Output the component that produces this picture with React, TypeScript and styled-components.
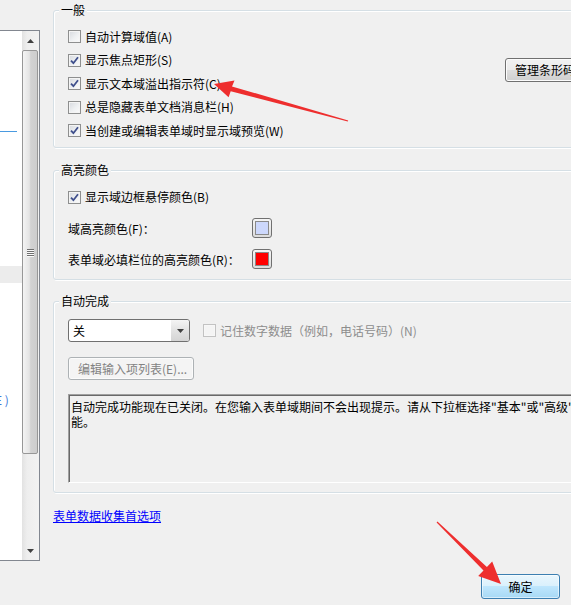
import React from "react";
import styled, { createGlobalStyle } from "styled-components";

const GlobalStyle = createGlobalStyle`
  html, body { margin: 0; padding: 0; background: #f0f0f0; }
  body {
    font-family: "Noto Sans CJK SC", "Microsoft YaHei", "DejaVu Sans", sans-serif;
    font-size: 12px;
    color: #000;
  }
`;

const Root = styled.div`
  position: relative;
  width: 571px;
  height: 605px;
  overflow: hidden;
  display: flex;
  align-items: flex-start;
  background: #f0f0f0;
`;

/* ---------- left list ---------- */
const ListBox = styled.div`
  flex: 0 0 40px;
  margin-top: 30px;
  height: 531px;
  box-sizing: border-box;
  background: #fff;
  border: 1px solid #828790;
  border-left: none;
  display: flex;
`;

const ListBody = styled.div`
  flex: 0 0 22px;
  display: flex;
  flex-direction: column;
  overflow: hidden;
`;

const BlueRule = styled.div`
  margin-top: 100px;
  width: 17px;
  height: 1px;
  background: #4a9ae0;
`;

const HoverRow = styled.div`
  margin-top: 134px;
  height: 17px;
  background: #ececec;
`;

const ListText = styled.div`
  margin-top: 110px;
  margin-left: -5px;
  line-height: 14px;
  white-space: nowrap;
  color: #3b78d8;
`;

const ScrollBar = styled.div`
  flex: 0 0 17px;
  display: flex;
  flex-direction: column;
  background: linear-gradient(to right, #e2e2e2, #eeeeee 30%, #f2f2f2);
`;

const ScrollArrow = styled.div`
  height: 19px;
  display: flex;
  align-items: center;
  justify-content: center;
`;

const Thumb = styled.div`
  height: 404px;
  margin: 0 1px 0 0;
  box-sizing: border-box;
  border: 1px solid #979797;
  border-radius: 2px;
  background: linear-gradient(to right, #f4f4f4, #e4e4e4 45%, #d2d2d2 55%, #cdcdcd);
  display: flex;
  align-items: center;
  justify-content: center;
`;

const Grip = styled.div`
  display: flex;
  flex-direction: column;
  gap: 1px;
  & > span {
    display: block;
    width: 7px;
    height: 1px;
    background: #6f6f6f;
    box-shadow: 0 1px 0 #fafafa;
  }
`;

const Track = styled.div`
  flex: 1;
`;

/* ---------- main ---------- */
const Main = styled.div`
  flex: 0 0 600px;
  margin-left: 13px;
  height: 605px;
  box-sizing: border-box;
  padding: 10px 0 6px;
  display: flex;
  flex-direction: column;
`;

const GroupBox = styled.section<{ $mt: number; $pb: number }>`
  margin-top: ${(p) => p.$mt}px;
  padding: 0 14px ${(p) => p.$pb}px 14px;
  border: 1px solid #d5dfe5;
  border-radius: 3px;
  box-shadow: inset 1px 1px 0 #fff, 1px 1px 0 #fff;
  display: flex;
  flex-direction: column;
`;

const GroupTitle = styled.div`
  align-self: flex-start;
  margin: -8px 0 0 -9px;
  padding: 0 2px;
  line-height: 14px;
  background: #f0f0f0;
  white-space: nowrap;
`;

const GeneralBody = styled.div`
  display: flex;
  align-items: flex-start;
  margin-top: 8px;
`;

const CheckColumn = styled.div`
  flex: 0 0 437px;
  display: flex;
  flex-direction: column;
`;

const CheckRow = styled.label<{ $h: number; $disabled?: boolean }>`
  height: ${(p) => p.$h}px;
  display: flex;
  align-items: center;
  gap: 4px;
  white-space: nowrap;
  line-height: 14px;
  color: ${(p) => (p.$disabled ? "#8d8d8d" : "#000")};
`;

const Box = styled.span<{ $disabled?: boolean }>`
  flex: 0 0 13px;
  width: 13px;
  height: 13px;
  box-sizing: border-box;
  border: 1px solid ${(p) => (p.$disabled ? "#c2c2c2" : "#8e8f8f")};
  background: ${(p) =>
    p.$disabled
      ? "#f4f4f4"
      : "linear-gradient(135deg, #d6d9de 0%, #eef0f2 55%, #fbfbfb 100%)"};
  box-shadow: inset 0 0 0 1px ${(p) => (p.$disabled ? "#f7f7f7" : "#f4f4f4")};
  display: flex;
  align-items: center;
  justify-content: center;
`;

const WinButton = styled.div<{ $disabled?: boolean }>`
  height: 24px;
  box-sizing: border-box;
  padding: 0 9px;
  border: 1px solid ${(p) => (p.$disabled ? "#adb2b5" : "#707070")};
  border-radius: 3px;
  background: ${(p) =>
    p.$disabled
      ? "#f4f4f4"
      : "linear-gradient(#f2f2f2 0%, #ebebeb 50%, #dddddd 50%, #cfcfcf 100%)"};
  box-shadow: inset 0 0 0 1px ${(p) => (p.$disabled ? "#fbfbfb" : "#fcfcfc")};
  color: ${(p) => (p.$disabled ? "#838383" : "#000")};
  display: flex;
  align-items: center;
  white-space: nowrap;
  line-height: 14px;
`;

const ManageButton = styled(WinButton)`
  margin-top: 33px;
`;

const ColorRows = styled.div`
  margin-top: 4.5px;
  display: flex;
  flex-direction: column;
`;

const ColorRow = styled.div`
  height: 31px;
  display: flex;
  align-items: center;
  white-space: nowrap;
`;

const ColorLabel = styled.span`
  flex: 0 0 184px;
`;

const Swatch = styled.div<{ $color: string }>`
  width: 20px;
  height: 20px;
  box-sizing: border-box;
  border: 1px solid #707070;
  border-radius: 3px;
  background: linear-gradient(#f6f6f6, #dcdcdc);
  display: flex;
  align-items: center;
  justify-content: center;
  &::after {
    content: "";
    width: 14px;
    height: 14px;
    box-sizing: border-box;
    border: 1px solid #8a8a8a;
    background: ${(p) => p.$color};
  }
`;

const AutoRow = styled.div`
  margin-top: 11px;
  height: 23px;
  display: flex;
  align-items: center;
  gap: 13px;
`;

const Combo = styled.div`
  flex: 0 0 122px;
  height: 23px;
  box-sizing: border-box;
  border: 1px solid #707070;
  border-radius: 3px;
  background: #fff;
  display: flex;
  align-items: stretch;
  overflow: hidden;
`;

const ComboText = styled.span`
  flex: 1;
  padding-left: 4px;
  line-height: 21px;
`;

const ComboArrow = styled.span`
  flex: 0 0 18px;
  background: linear-gradient(#f4f4f4, #e2e2e2 50%, #d4d4d4);
  display: flex;
  align-items: center;
  justify-content: center;
`;

const EditListButton = styled(WinButton)`
  margin-top: 15px;
  align-self: flex-start;
  width: 126px;
  height: 23px;
`;

const InfoBox = styled.div`
  margin-top: 14px;
  height: 89px;
  box-sizing: border-box;
  border: 1px solid;
  border-color: #a0a0a0 #ffffff #ffffff #a0a0a0;
  box-shadow: inset 1px 1px 0 #696969;
  padding: 4px 2px;
  line-height: 15px;
  white-space: nowrap;
  overflow: hidden;
`;

const PrefLink = styled.a`
  margin-top: 16px;
  align-self: flex-start;
  line-height: 14px;
  color: #0000ff;
  text-decoration: underline;
  cursor: pointer;
`;

const Footer = styled.div`
  margin-top: auto;
  padding-left: 428px;
  display: flex;
`;

const OkButton = styled.div`
  width: 79px;
  height: 25px;
  box-sizing: border-box;
  border: 1px solid #3c7fb1;
  border-radius: 3px;
  background: linear-gradient(#eaf6fd 0%, #d9f0fc 50%, #bee6fd 50%, #a7d9f5 100%);
  box-shadow: inset 0 0 0 1px rgba(255, 255, 255, 0.55);
  display: flex;
  align-items: center;
  justify-content: center;
  line-height: 14px;
`;

const Annotations = styled.svg`
  position: absolute;
  left: 0;
  top: 0;
  width: 571px;
  height: 605px;
  pointer-events: none;
`;

const Check = () => (
  <svg width="9" height="9" viewBox="0 0 9 9">
    <path d="M1 4.6 L3.4 7.2 L8 1.2" fill="none" stroke="#3f4f8c" strokeWidth="1.8" />
  </svg>
);

const Cb = ({ checked, disabled }: { checked?: boolean; disabled?: boolean }) => (
  <Box $disabled={disabled}>{checked ? <Check /> : null}</Box>
);

const Tri = ({ up }: { up?: boolean }) => (
  <svg width="7" height="4" viewBox="0 0 7 4">
    <path d={up ? "M0 4 L3.5 0 L7 4 Z" : "M0 0 L3.5 4 L7 0 Z"} fill="#404040" />
  </svg>
);

const general: [string, boolean][] = [
  ["自动计算域值(A)", false],
  ["显示焦点矩形(S)", true],
  ["显示文本域溢出指示符(C)", true],
  ["总是隐藏表单文档消息栏(H)", false],
  ["当创建或编辑表单域时显示域预览(W)", true],
];

export default function App() {
  return (
    <>
      <GlobalStyle />
      <Root>
        <ListBox>
          <ListBody>
            <BlueRule />
            <HoverRow />
            <ListText>E )</ListText>
          </ListBody>
          <ScrollBar>
            <ScrollArrow>
              <Tri up />
            </ScrollArrow>
            <Thumb>
              <Grip>
                <span />
                <span />
                <span />
                <span />
              </Grip>
            </Thumb>
            <Track />
            <ScrollArrow>
              <Tri />
            </ScrollArrow>
          </ScrollBar>
        </ListBox>

        <Main>
          <GroupBox $mt={0} $pb={4.5}>
            <GroupTitle>一般</GroupTitle>
            <GeneralBody>
              <CheckColumn>
                {general.map(([t, c]) => (
                  <CheckRow key={t} $h={23.5}>
                    <Cb checked={c} />
                    {t}
                  </CheckRow>
                ))}
              </CheckColumn>
              <ManageButton>管理条形码...</ManageButton>
            </GeneralBody>
          </GroupBox>

          <GroupBox $mt={22} $pb={4.5}>
            <GroupTitle>高亮颜色</GroupTitle>
            <ColorRows>
              <CheckRow $h={31}>
                <Cb checked />
                显示域边框悬停颜色(B)
              </CheckRow>
              <ColorRow>
                <ColorLabel>域高亮颜色(F)：</ColorLabel>
                <Swatch $color="#cdd8fc" />
              </ColorRow>
              <ColorRow>
                <ColorLabel>表单域必填栏位的高亮颜色(R)：</ColorLabel>
                <Swatch $color="#ff0000" />
              </ColorRow>
            </ColorRows>
          </GroupBox>

          <GroupBox $mt={21} $pb={9}>
            <GroupTitle>自动完成</GroupTitle>
            <AutoRow>
              <Combo>
                <ComboText>关</ComboText>
                <ComboArrow>
                  <Tri />
                </ComboArrow>
              </Combo>
              <CheckRow $h={23} $disabled>
                <Cb disabled />
                记住数字数据（例如，电话号码）(N)
              </CheckRow>
            </AutoRow>
            <EditListButton $disabled>编辑输入项列表(E)...</EditListButton>
            <InfoBox>
              自动完成功能现在已关闭。在您输入表单域期间不会出现提示。请从下拉框选择"基本"或"高级"以启用自动完成功
              <br />
              能。
            </InfoBox>
          </GroupBox>

          <PrefLink>表单数据收集首选项</PrefLink>

          <Footer>
            <OkButton>确定</OkButton>
          </Footer>
        </Main>

        <Annotations viewBox="0 0 571 605">
          <polygon
            fill="#ee2e2e"
            points="348.2,120.4 232.0,86.4 234.5,80.6 214,84 228.6,97.2 230.7,91.2 347.8,121.6"
          />
          <polygon
            fill="#ee2e2e"
            points="437.4,521.6 486.9,566.9 492.2,561.4 501,584 478.2,575.9 483.5,570.5 436.6,522.4"
          />
        </Annotations>
      </Root>
    </>
  );
}
